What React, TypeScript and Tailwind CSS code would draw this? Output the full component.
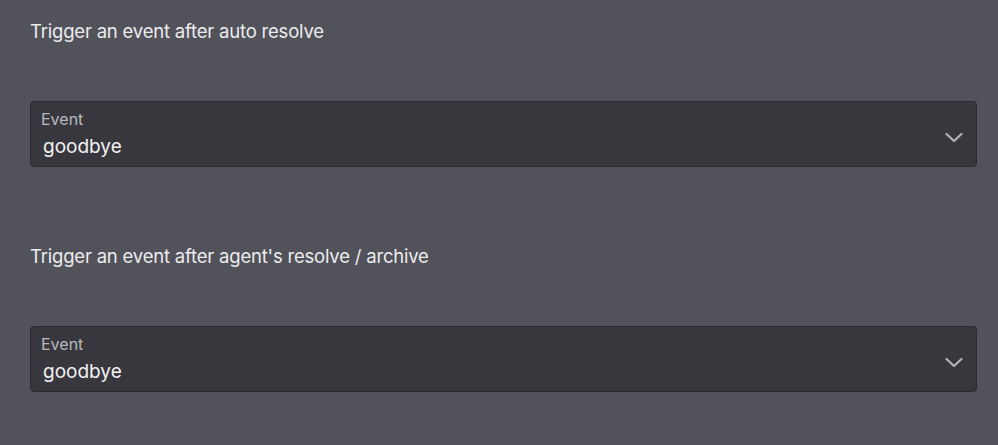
const sections = [
  { title: "Trigger an event after auto resolve", value: "goodbye" },
  { title: "Trigger an event after agent's resolve / archive", value: "goodbye" },
];

const Chevron = () => (
  <svg width="20" height="12" viewBox="0 0 20 12" fill="none" className="mt-[7px]">
    <path d="M2.5 2 L10 9 L17.5 2" stroke="#b4b4b8" strokeWidth="2.2" strokeLinecap="round" strokeLinejoin="round" />
  </svg>
);

const EventSelect = ({ value }: { value: string }) => (
  <div className="flex h-[66px] items-center justify-between rounded-[4px] border border-[#2a2a2f] bg-[#38373d] pl-[10px] pr-[12px]">
    <div className="flex flex-col">
      <span className="text-[16px] leading-[20px] text-[#b9b9bd]">Event</span>
      <span className="ml-[2px] mt-[6px] text-[19px] leading-[24px] text-[#f2f2f4]">
        {value}
      </span>
    </div>
    <Chevron />
  </div>
);

export default function App() {
  return (
    <div
      className="h-[445px] w-[998px] bg-[#52525a] pl-[30px] pr-[21px] pt-[18px]"
      style={{ fontFamily: "Inter, 'Noto Sans', sans-serif" }}
    >
      {sections.map((s) => (
        <section key={s.title} className="mb-[76px]">
          <h2 className="text-[18.5px] leading-[26px] tracking-[-0.2px] text-[#ececee]">
            {s.title}
          </h2>
          <div className="mt-[57px]">
            <EventSelect value={s.value} />
          </div>
        </section>
      ))}
    </div>
  );
}
